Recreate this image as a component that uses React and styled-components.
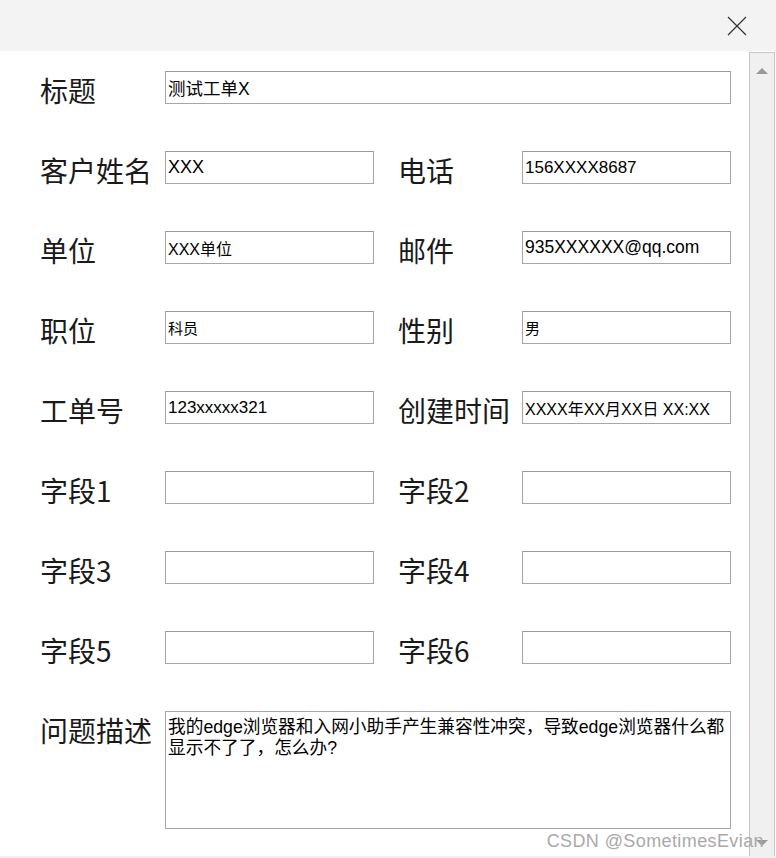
import React from "react";
import styled, { createGlobalStyle } from "styled-components";

const Global = createGlobalStyle`
  html, body { margin: 0; padding: 0; background: #ffffff; }
  #root { width: 776px; height: 858px; }
`;

const Window = styled.div`
  position: relative;
  width: 776px;
  height: 858px;
  display: flex;
  flex-direction: column;
  background: #ffffff;
  overflow: hidden;
  font-family: "Noto Sans CJK SC", "Noto Sans", sans-serif;
`;

const TitleBar = styled.div`
  height: 51px;
  flex: 0 0 51px;
  background: #f3f3f3;
  display: flex;
  justify-content: flex-end;
  align-items: stretch;
`;

const CloseButton = styled.div`
  width: 78px;
  display: flex;
  align-items: center;
  justify-content: center;
  box-sizing: border-box;
`;

const Body = styled.div`
  flex: 1;
  display: flex;
  min-height: 0;
  border-bottom: 2px solid #f0f0f0;
`;

const Form = styled.div`
  flex: 1;
  padding: 20px 0 0 40px;
  display: grid;
  grid-template-columns: 125px 209px 24px 124px 209px;
  grid-auto-rows: 33px;
  row-gap: 47px;
  align-content: start;
`;

const Label = styled.div`
  grid-column: ${(p) => p.col};
  font-size: 28px;
  line-height: 33px;
  height: 33px;
  color: #1a1a1a;
  white-space: nowrap;
  padding-top: 3px;
  box-sizing: border-box;
  font-family: "Noto Sans CJK SC", "Noto Sans", sans-serif;
`;

const Field = styled.div`
  grid-column: ${(p) => p.span || "auto"};
  box-sizing: border-box;
  height: 33px;
  border: 1px solid #a6a6a6;
  border-top-color: #9a9a9a;
  background: #ffffff;
  display: flex;
  align-items: center;
  padding: 0 2px 0 2px;
  font-family: "Liberation Sans", "Noto Sans CJK SC", sans-serif;
  font-size: ${(p) => p.size || 17}px;
  color: #000000;
  white-space: nowrap;
  overflow: hidden;
`;

const TextArea = styled.div`
  grid-column: 2 / 6;
  box-sizing: border-box;
  height: 118px;
  border: 1px solid #a6a6a6;
  background: #ffffff;
  padding: 5px 2px 0 2px;
  font-family: "Liberation Sans", "Noto Sans CJK SC", sans-serif;
  font-size: 17.7px;
  line-height: 21px;
  color: #000000;
  white-space: pre;
  overflow: hidden;
`;

const Scrollbar = styled.div`
  width: 26px;
  flex: 0 0 26px;
  margin: 1px 1px 0 0;
  box-sizing: border-box;
  border: 1px solid #c6c6c6;
  border-bottom: none;
  background: #f0f0f0;
  display: flex;
  flex-direction: column;
  justify-content: space-between;
  align-items: center;
  padding: 15px 0 10px 0;
`;

const ArrowUp = styled.div`
  width: 0;
  height: 0;
  border-left: 6px solid transparent;
  border-right: 6px solid transparent;
  border-bottom: 6px solid #999999;
`;

const ArrowDown = styled.div`
  width: 0;
  height: 0;
  border-left: 6px solid transparent;
  border-right: 6px solid transparent;
  border-top: 6px solid #999999;
`;

const Watermark = styled.div`
  position: absolute;
  right: 12px;
  bottom: 6px;
  font-family: "Liberation Sans", sans-serif;
  font-size: 18px;
  letter-spacing: 0.4px;
  color: #a9a9a9;
  white-space: nowrap;
`;

const rows = [
  ["客户姓名", "XXX", 18, "电话", "156XXXX8687", 17],
  ["单位", "XXX单位", 16, "邮件", "935XXXXXX@qq.com", 17.5],
  ["职位", "科员", 15, "性别", "男", 15],
  ["工单号", "123xxxxx321", 17, "创建时间", "XXXX年XX月XX日 XX:XX", 16],
  ["字段1", "", 17, "字段2", "", 17],
  ["字段3", "", 17, "字段4", "", 17],
  ["字段5", "", 17, "字段6", "", 17],
];

export default function App() {
  return (
    <>
      <Global />
      <Window>
        <TitleBar>
          <CloseButton>
            <svg width="20" height="20" viewBox="0 0 20 20">
              <path d="M1 1 L19 19 M19 1 L1 19" stroke="#333" strokeWidth="1.2" fill="none" />
            </svg>
          </CloseButton>
        </TitleBar>
        <Body>
          <Form>
            <Label col={1}>标题</Label>
            <Field span="2 / 6" size={17.5}>测试工单X</Field>
            {rows.map(([l1, v1, s1, l2, v2, s2]) => (
              <React.Fragment key={l1}>
                <Label col={1}>{l1}</Label>
                <Field span={2} size={s1}>{v1}</Field>
                <Label col={4}>{l2}</Label>
                <Field span={5} size={s2}>{v2}</Field>
              </React.Fragment>
            ))}
            <Label col={1}>问题描述</Label>
            <TextArea>
              {"我的edge浏览器和入网小助手产生兼容性冲突，导致edge浏览器什么都\n显示不了了，怎么办?"}
            </TextArea>
          </Form>
          <Scrollbar>
            <ArrowUp />
            <ArrowDown />
          </Scrollbar>
        </Body>
        <Watermark>CSDN @SometimesEvian</Watermark>
      </Window>
    </>
  );
}
